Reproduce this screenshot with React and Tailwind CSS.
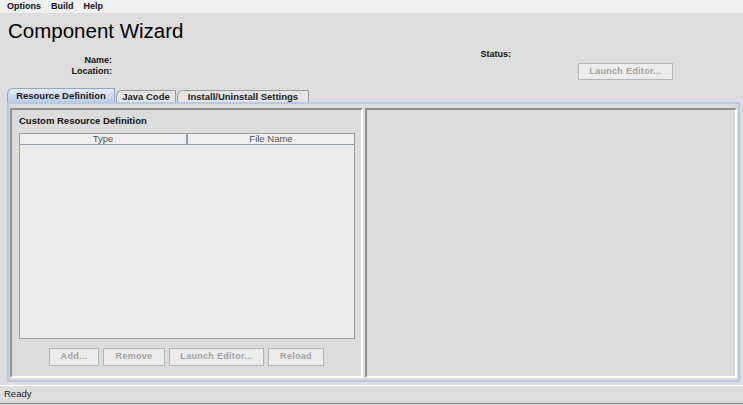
const font = { fontFamily: '"Liberation Sans", Arial, sans-serif' };

function Tab({ label, selected, width }) {
  return (
    <div
      className={`flex items-center justify-center font-bold text-[9.5px] leading-none text-[#222] rounded-tl-[6px] border border-b-0 ${
        selected
          ? 'h-[14px] bg-gradient-to-b from-[#e4ecf7] to-[#bccde6] border-[#8fa6c8]'
          : 'h-[12px] bg-[#e4e4e4] border-[#9a9a9a]'
      }`}
      style={{ width }}
    >
      {label}
    </div>
  );
}

function Btn({ label, width, height = 18 }) {
  return (
    <button
      disabled
      className="flex items-center justify-center bg-[#ececec] border border-[#b4b4b4] text-[#a2a2a2] font-bold text-[9px] tracking-[0.3px]"
      style={{ width, height }}
    >
      {label}
    </button>
  );
}

export default function App() {
  return (
    <div className="w-[743px] h-[405px] overflow-hidden bg-[#dddddd] text-[#111] flex flex-col" style={font}>
      {/* menu bar */}
      <div className="h-[13px] bg-[#efefef] flex items-center gap-[10px] pl-[7px] text-[9px] font-bold leading-none">
        <span>Options</span>
        <span>Build</span>
        <span>Help</span>
      </div>

      {/* title */}
      <div className="pt-[3px] pl-[8px] h-[33px] text-[20.5px] leading-[30px] text-black">Component Wizard</div>

      {/* info row */}
      <div className="h-[42px] flex text-[9px] font-bold leading-[11px]">
        <div className="w-[112px] text-right pt-[9px]">
          <div>Name:</div>
          <div>Location:</div>
        </div>
        <div className="w-[399px] text-right pt-[3px]">Status:</div>
        <div className="ml-[67px] pt-[17px]">
          <Btn label="Launch Editor..." width={95} height={17} />
        </div>
      </div>

      {/* tabs */}
      <div className="h-[14px] flex items-end pl-[7px] gap-[1px]">
        <Tab label="Resource Definition" selected width={108} />
        <Tab label="Java Code" width={60} />
        <Tab label="Install/Uninstall Settings" width={132} />
      </div>

      {/* tab content */}
      <div className="h-[280px] ml-[7px] mr-[3px] border-2 border-[#b6c8e2] bg-[#dcdcdc] flex gap-[2px] pt-[4px] pb-[2px] px-[1px]">
        {/* left panel */}
        <div className="w-[353px] flex flex-col border-2 border-t-[#909090] border-l-[#909090] border-b-white border-r-white pt-[5px] pb-[10px]">
          <div className="pl-[7px] text-[9.5px] font-bold leading-[12px]">Custom Resource Definition</div>
          <div className="mt-[6px] ml-[7px] w-[336px] flex-1 flex flex-col border border-[#a0a0a0] bg-[#ececec]">
            <div className="h-[11px] flex border-b border-[#8e9cac] bg-[#eeeeee] text-[9.5px] leading-none text-[#555]">
              <div className="w-[168px] flex items-center justify-center border-r-2 border-[#8e9cac]">Type</div>
              <div className="flex-1 flex items-center justify-center">File Name</div>
            </div>
            <div className="flex-1"></div>
          </div>
          <div className="mt-[9px] flex justify-center gap-[4px]">
            <Btn label="Add..." width={50} />
            <Btn label="Remove" width={62} />
            <Btn label="Launch Editor..." width={95} />
            <Btn label="Reload" width={56} />
          </div>
        </div>
        {/* right panel */}
        <div className="flex-1 border-2 border-t-[#909090] border-l-[#909090] border-b-white border-r-white"></div>
      </div>

      {/* status bar */}
      <div className="mt-[3px] h-[19px] border-t border-white border-b border-b-[#8a8a8a] flex items-center pl-[4px] text-[9.5px] text-[#222]">
        Ready
      </div>
    </div>
  );
}
